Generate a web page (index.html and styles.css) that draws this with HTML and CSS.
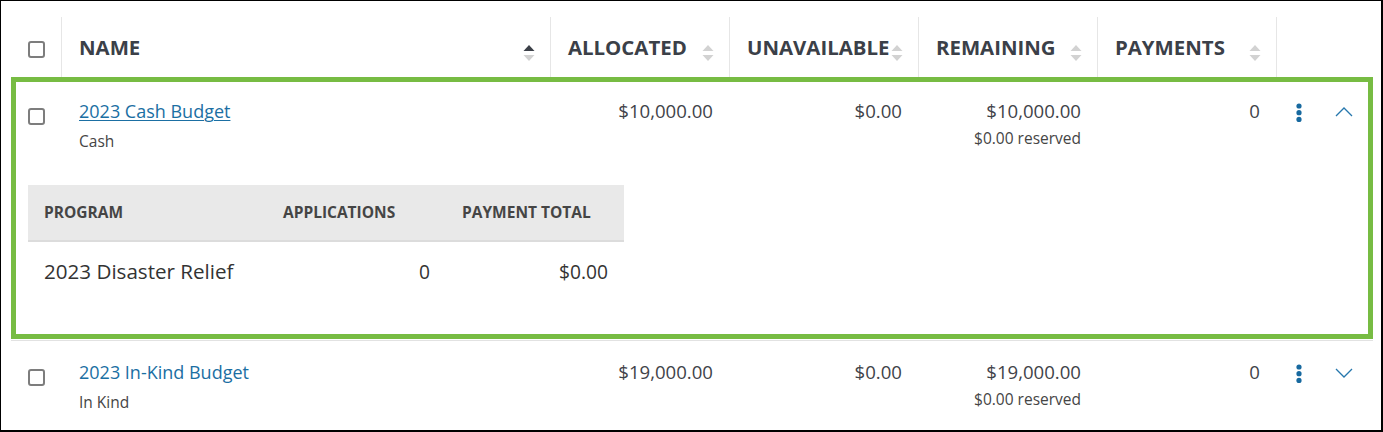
FILE: index.html
```html
<!DOCTYPE html>
<html lang="en">
<head>
<meta charset="utf-8">
<title>Budgets</title>
<link rel="stylesheet" href="styles.css">
</head>
<body>
<div class="frame">
  <div class="grid thead">
    <div class="th th-check"><span class="cb cb-head"></span></div>
    <div class="th"><span class="th-label">NAME</span>
      <svg class="sort" width="12" height="18" viewBox="0 0 12 18"><path d="M0.5 7 L6 1 L11.5 7Z" class="s-on"/><path d="M0.5 11 L6 17 L11.5 11Z" class="s-off"/></svg></div>
    <div class="th"><span class="th-label">ALLOCATED</span>
      <svg class="sort" width="12" height="18" viewBox="0 0 12 18"><path d="M0.5 7 L6 1 L11.5 7Z" class="s-off"/><path d="M0.5 11 L6 17 L11.5 11Z" class="s-off"/></svg></div>
    <div class="th"><span class="th-label">UNAVAILABLE</span>
      <svg class="sort" width="12" height="18" viewBox="0 0 12 18"><path d="M0.5 7 L6 1 L11.5 7Z" class="s-off"/><path d="M0.5 11 L6 17 L11.5 11Z" class="s-off"/></svg></div>
    <div class="th"><span class="th-label">REMAINING</span>
      <svg class="sort" width="12" height="18" viewBox="0 0 12 18"><path d="M0.5 7 L6 1 L11.5 7Z" class="s-off"/><path d="M0.5 11 L6 17 L11.5 11Z" class="s-off"/></svg></div>
    <div class="th"><span class="th-label">PAYMENTS</span>
      <svg class="sort" width="12" height="18" viewBox="0 0 12 18"><path d="M0.5 7 L6 1 L11.5 7Z" class="s-off"/><path d="M0.5 11 L6 17 L11.5 11Z" class="s-off"/></svg></div>
    <div class="th"></div>
  </div>

  <div class="expanded-wrap">
    <div class="expanded">
      <div class="grid row">
        <div class="cell-check"><span class="cb"></span></div>
        <div class="cell-name">
          <a class="link link-active" href="#">2023 Cash Budget</a>
          <div class="sub sub-name">Cash</div>
        </div>
        <div class="cell num">$10,000.00</div>
        <div class="cell num">$0.00</div>
        <div class="cell num">$10,000.00<div class="sub sub-num">$0.00 reserved</div></div>
        <div class="cell num">0</div>
        <div class="cell-actions">
          <svg class="kebab" width="6" height="20" viewBox="0 0 6 20"><circle cx="3" cy="3" r="2.6"/><circle cx="3" cy="9.7" r="2.6"/><circle cx="3" cy="16.4" r="2.6"/></svg>
          <svg class="chev" width="18" height="10" viewBox="0 0 18 10"><path d="M1 9 L9 1 L17 9"/></svg>
        </div>
      </div>

      <div class="detail">
        <div class="dgrid dhead">
          <div class="dh">PROGRAM</div>
          <div class="dh">APPLICATIONS</div>
          <div class="dh">PAYMENT TOTAL</div>
        </div>
        <div class="dgrid dbody">
          <div class="dc dc-name">2023 Disaster Relief</div>
          <div class="dc dc-num">0</div>
          <div class="dc dc-num">$0.00</div>
        </div>
      </div>
    </div>
  </div>

  <div class="grid row row-plain">
    <div class="cell-check"><span class="cb"></span></div>
    <div class="cell-name">
      <a class="link" href="#">2023 In-Kind Budget</a>
      <div class="sub sub-name">In Kind</div>
    </div>
    <div class="cell num">$19,000.00</div>
    <div class="cell num">$0.00</div>
    <div class="cell num">$19,000.00<div class="sub sub-num">$0.00 reserved</div></div>
    <div class="cell num">0</div>
    <div class="cell-actions">
      <svg class="kebab" width="6" height="20" viewBox="0 0 6 20"><circle cx="3" cy="3" r="2.6"/><circle cx="3" cy="9.7" r="2.6"/><circle cx="3" cy="16.4" r="2.6"/></svg>
      <svg class="chev" width="18" height="10" viewBox="0 0 18 10"><path d="M1 1 L9 9 L17 1"/></svg>
    </div>
  </div>
</div>
</body>
</html>
```

FILE: styles.css
```css
* { box-sizing: border-box; }

body {
  margin: 0;
  background: #fff;
  font-family: "Open Sans", "Noto Sans", sans-serif;
  color: #3f4349;
}

.frame {
  width: 1383px;
  height: 432px;
  border-style: solid;
  border-color: #000;
  border-width: 1px 2px 2px 1px;
  overflow: hidden;
  background: #fff;
}

.grid {
  display: grid;
  grid-template-columns: 60px 489px 179px 189px 179px 179px 105px;
}

.expanded .grid {
  grid-template-columns: 45px 489px 179px 189px 179px 179px 92px;
}

/* header */
.thead {
  height: 76px;
  align-items: end;
}

.th {
  height: 60px;
  display: flex;
  align-items: center;
  padding: 0 15px 0 17px;
  border-left: 1px solid #e6e6e6;
}

.th-check {
  border-left: none;
  justify-content: flex-end;
  padding: 5px 16px 0 0;
}

.th-label {
  font-size: 20.4px;
  font-weight: 700;
  color: #3b4048;
  white-space: nowrap;
}

.sort {
  display: block;
  flex-shrink: 0;
  margin-left: auto;
  margin-top: 12px;
}

.s-on { fill: #3c4048; }
.s-off { fill: #d2d2d2; }

/* checkbox */
.cb {
  display: block;
  width: 17px;
  height: 17px;
  border: 2px solid #7d7d7d;
  border-radius: 3px;
  background: #fff;
}

/* expanded row */
.expanded-wrap {
  margin: 0 8px 0 10px;
  padding-bottom: 1px;
  border-bottom: 1px solid #e2e2e2;
}

.expanded {
  border: 5px solid #77bc43;
  padding-bottom: 29px;
}

.row {
  padding-top: 17px;
  align-items: start;
}

.row-plain {
  padding-top: 19px;
}

.cell-check {
  display: flex;
  justify-content: flex-end;
  padding: 9px 16px 0 0;
}

.cell-name {
  padding-left: 18px;
}

.link {
  font-size: 18px;
  line-height: 24px;
  color: #1b6fa3;
  text-decoration: none;
}

.link-active {
  text-decoration: underline;
  text-underline-offset: 2px;
  text-decoration-thickness: 1px;
}

.sub {
  font-size: 15.5px;
  line-height: 20px;
  color: #454545;
}

.sub-name { margin-top: 8px; }
.sub-num { margin-top: 5px; }

.cell {
  font-size: 18.6px;
  line-height: 24px;
  padding: 0 16px;
}

.num { text-align: right; }

.cell-actions {
  display: flex;
  align-items: flex-start;
  padding-left: 20px;
}

.kebab {
  display: block;
  margin-top: 4px;
  fill: #17699f;
}

.chev {
  display: block;
  margin-top: 8px;
  margin-left: 33px;
  fill: none;
  stroke: #2677ad;
  stroke-width: 1.3;
}

/* nested program table */
.detail {
  margin: 34px 0 0 12px;
  width: 596px;
}

.dgrid {
  display: grid;
  grid-template-columns: 239px 179px 178px;
}

.dhead {
  height: 57px;
  align-items: center;
  background: #e9e9e9;
  border-bottom: 2px solid #dcdcdc;
}

.dh {
  padding: 0 16px 2px;
  font-size: 15.5px;
  font-weight: 700;
  color: #454545;
  white-space: nowrap;
}

.dbody {
  align-items: baseline;
}

.dc {
  padding: 15px 16px 19px;
  line-height: 28px;
  color: #333;
}

.dc-name { font-size: 20.6px; }

.dc-num {
  font-size: 19.2px;
  text-align: right;
}
```
